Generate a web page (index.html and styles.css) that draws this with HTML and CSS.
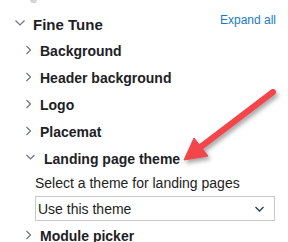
FILE: index.html
```html
<!DOCTYPE html>
<html lang="en">
<head>
  <meta charset="UTF-8">
  <title>Fine Tune</title>
  <link rel="stylesheet" href="styles.css">
</head>
<body>
  <div class="panel">
    <div class="stub"></div>

    <div class="head">
      <div class="head-title">
        <svg class="chev chev-top" width="18" height="27" viewBox="0 0 18 27"><path d="M0.5 9.5 L5 14 L9.5 9.5" /></svg>
        <span>Fine Tune</span>
      </div>
      <a class="expand" href="#">Expand all</a>
    </div>

    <ul class="sections">
      <li class="row">
        <svg class="chev" width="14" height="27" viewBox="0 0 14 27"><path d="M0.5 8 L4.5 12 L0.5 16" /></svg>
        <span>Background</span>
      </li>
      <li class="row">
        <svg class="chev" width="14" height="27" viewBox="0 0 14 27"><path d="M0.5 8 L4.5 12 L0.5 16" /></svg>
        <span>Header background</span>
      </li>
      <li class="row">
        <svg class="chev" width="14" height="27" viewBox="0 0 14 27"><path d="M0.5 8 L4.5 12 L0.5 16" /></svg>
        <span>Logo</span>
      </li>
      <li class="row">
        <svg class="chev" width="14" height="27" viewBox="0 0 14 27"><path d="M0.5 8 L4.5 12 L0.5 16" /></svg>
        <span>Placemat</span>
      </li>
      <li class="open">
        <div class="row">
          <svg class="chev" width="18" height="27" viewBox="0 0 18 27"><path d="M0.5 9 L4.5 13 L8.5 9" /></svg>
          <span>Landing page theme</span>
        </div>
        <div class="field">
          <label class="field-label">Select a theme for landing pages</label>
          <div class="select">
            <span>Use this theme</span>
            <svg width="9" height="6" viewBox="0 0 9 6"><path d="M0.5 1 L4.5 5 L8.5 1" /></svg>
          </div>
        </div>
      </li>
      <li class="row">
        <svg class="chev" width="14" height="27" viewBox="0 0 14 27"><path d="M0.5 8 L4.5 12 L0.5 16" /></svg>
        <span>Module picker</span>
      </li>
    </ul>

    <!-- callout arrow drawn over the panel -->
    <svg class="callout" width="288" height="242" viewBox="0 0 288 242">
      <line x1="273" y1="92" x2="198" y2="149" />
      <polygon points="184,160 194,138 208,156" />
    </svg>
  </div>
</body>
</html>
```

FILE: styles.css
```css
body {
  margin: 0;
  font-family: "Liberation Sans", Arial, sans-serif;
  background-color: #fff;
  color: #1d2125;
}
.panel {
  position: relative;
  width: 288px;
  height: 242px;
  overflow: hidden;
}
.stub {
  width: 7px;
  height: 3px;
  margin-left: 30px;
  background-color: #d4d4d4;
  border-radius: 0 0 4px 4px;
}
.head {
  display: flex;
  justify-content: space-between;
  margin-top: 8px;
  padding: 0 12px 0 15px;
}
.head-title {
  display: flex;
  font-size: 15px;
  font-weight: bold;
  line-height: 27px;
}
.expand {
  margin-top: 1px;
  font-size: 12px;
  line-height: 16px;
  color: #1a7bc4;
  text-decoration: none;
}
.chev {
  flex-shrink: 0;
}
.chev path {
  fill: none;
  stroke: #6f757b;
  stroke-width: 1.2;
}
.sections {
  list-style: none;
  margin: 0;
  padding: 0 0 0 26px;
}
.row {
  display: flex;
  font-size: 14px;
  font-weight: bold;
  line-height: 27px;
  white-space: nowrap;
}
.field {
  padding-left: 9px;
}
.field-label {
  display: block;
  font-size: 14px;
  line-height: 20px;
  color: #222;
}
.select {
  display: flex;
  justify-content: space-between;
  align-items: center;
  box-sizing: border-box;
  width: 240px;
  height: 25px;
  margin: 3px 0 2px;
  padding: 0 10px 0 2px;
  border: 1px solid #c8c8c8;
  font-size: 14px;
  color: #222;
}
.select path {
  fill: none;
  stroke: #2b3a4a;
  stroke-width: 1.3;
}
.callout {
  position: absolute;
  left: 0;
  top: 0;
  filter: drop-shadow(2px 3px 2px rgba(0, 0, 0, 0.35));
}
.callout line {
  stroke: #f4454b;
  stroke-width: 6;
  stroke-linecap: round;
}
.callout polygon {
  fill: #f4454b;
  stroke: #f4454b;
  stroke-width: 1;
  stroke-linejoin: round;
}
```
